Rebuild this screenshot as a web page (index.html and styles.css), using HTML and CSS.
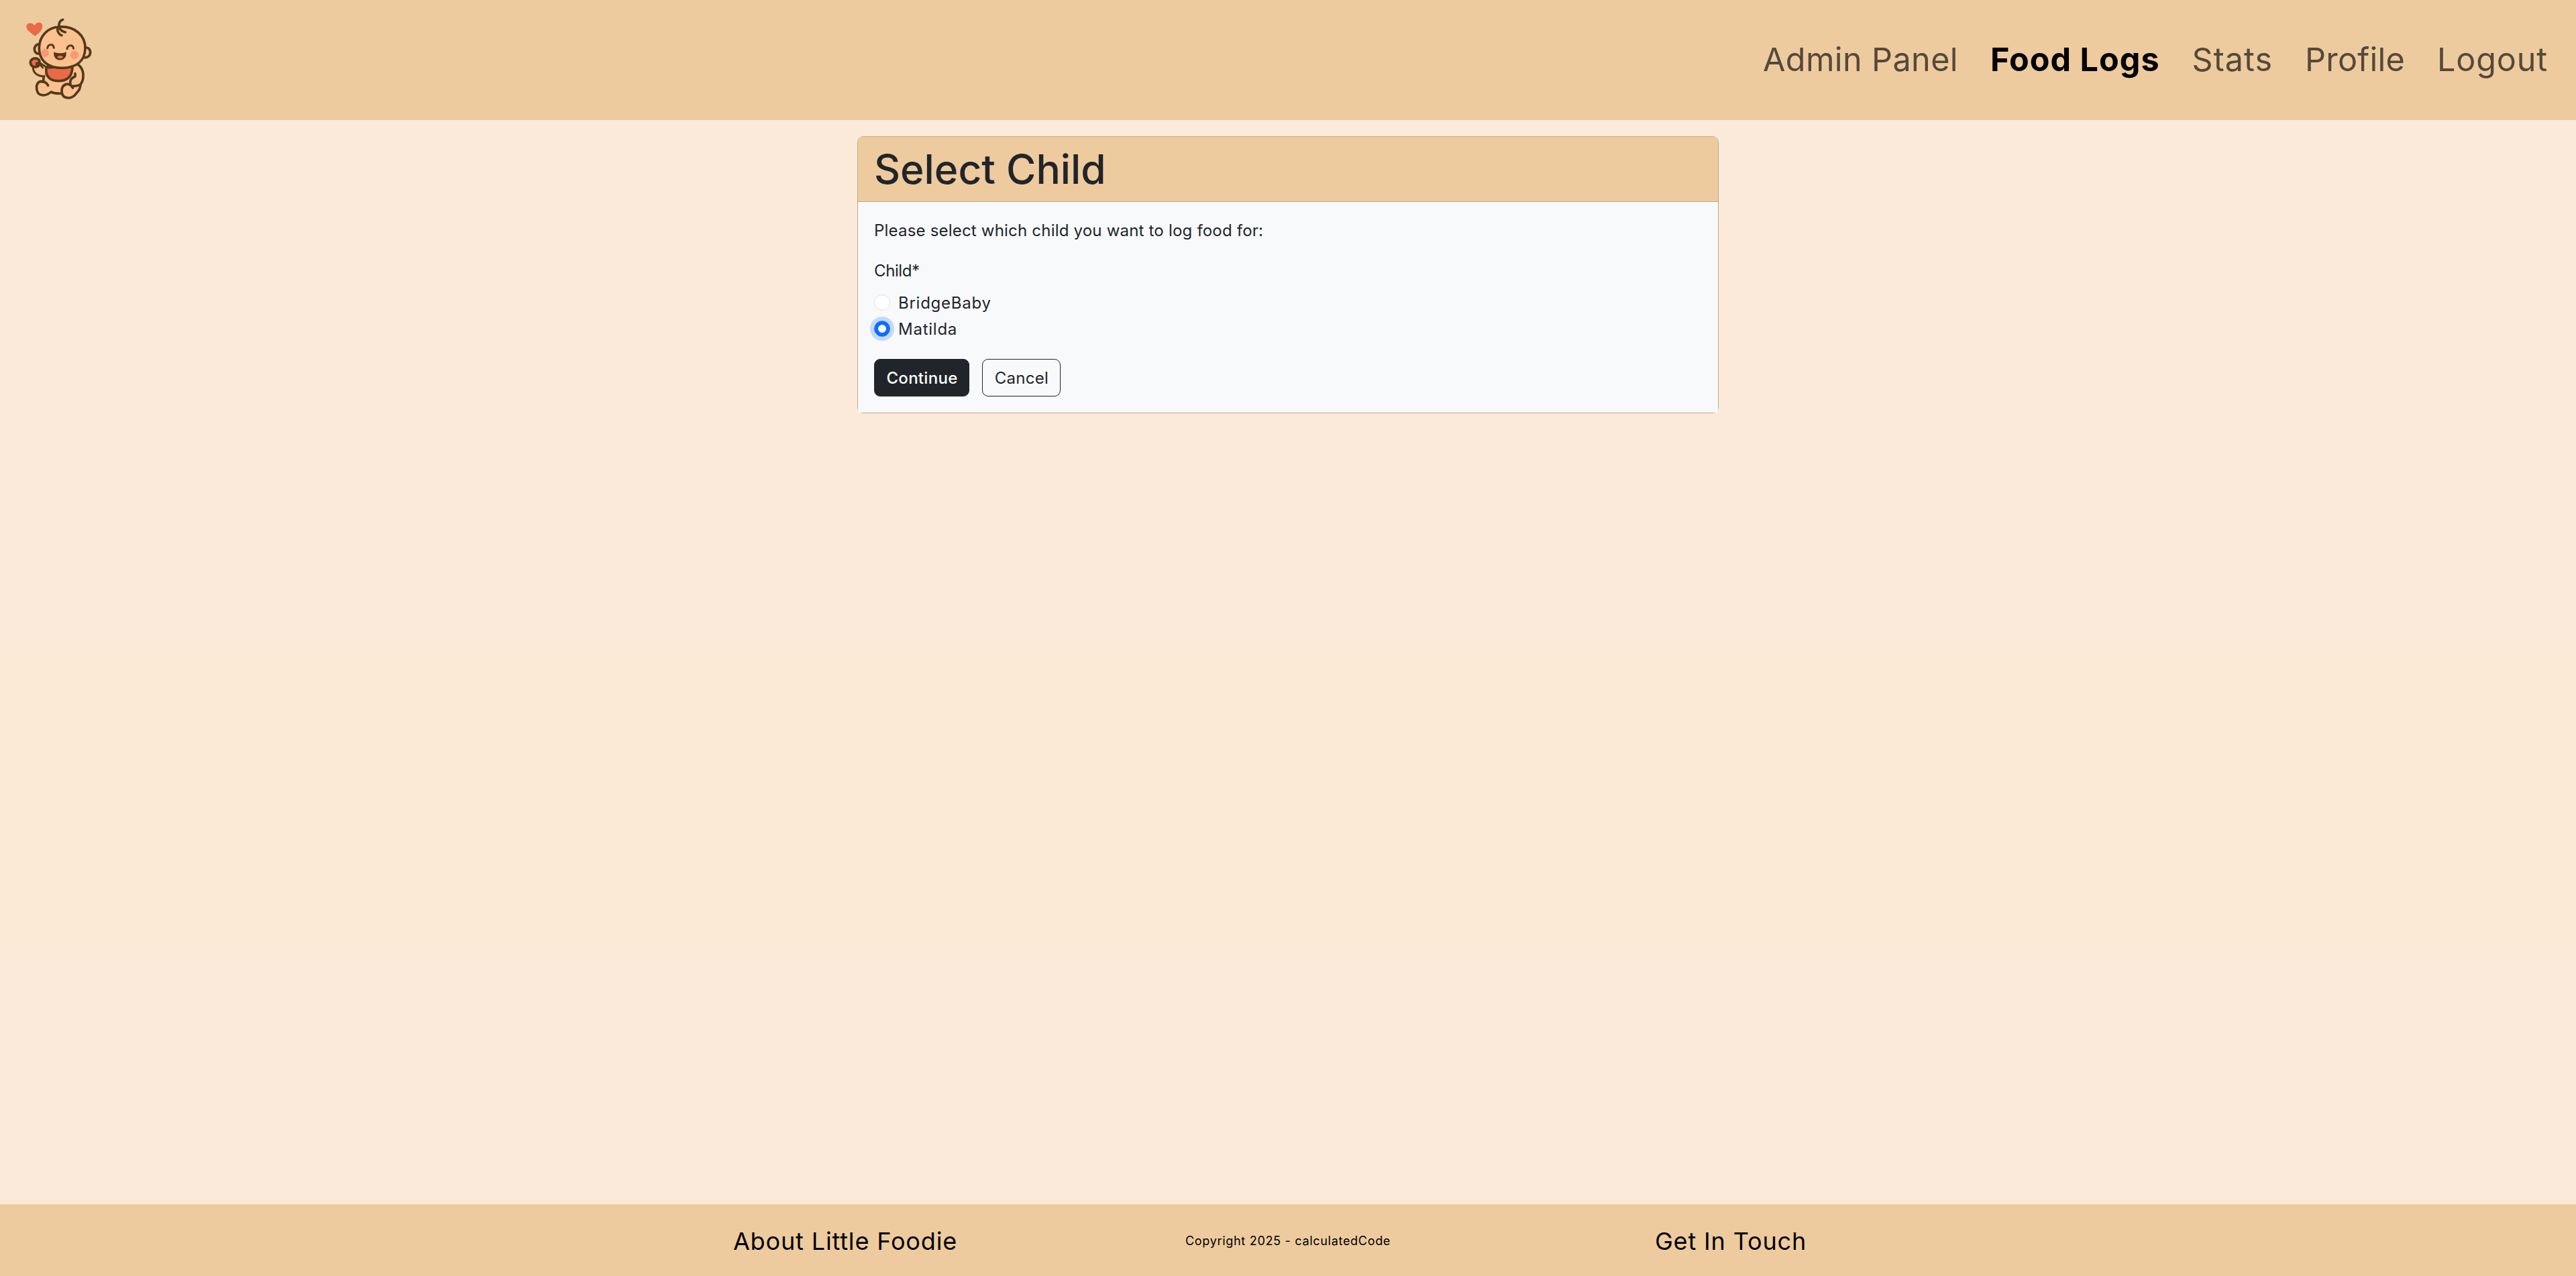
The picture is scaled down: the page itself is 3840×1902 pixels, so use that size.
FILE: index.html
```html
<!DOCTYPE html>
<html lang="en">
<head>
<meta charset="utf-8">
<title>Little Foodie</title>
<link rel="stylesheet" href="styles.css">
</head>
<body>
<header class="navbar">
  <a class="brand" href="#" aria-label="Little Foodie">
    <svg class="logo" viewBox="0 0 420 480" fill="none" stroke="#54391a" stroke-width="11" stroke-linecap="round" stroke-linejoin="round">
      <path d="M97 131C80 118 58 106 58 89c0-17 24-22 37-5 8-19 35-17 35 2 0 20-19 34-33 45z" fill="#ea6a48" stroke="none"/>
      <path d="M150 268C138 284 134 312 134 336c-28-10-34 20-28 40 5 22 36 28 62 5 12 6 32 8 50 7 2 14 14 20 30 20 24-2 32-20 46-36 5-9 6-15 5-24 12-12 14-30 13-48-2-20-10-32-24-42z" fill="#fac18e"/>
      <path d="M88 266c-1 27 17 44 50 45l14-39c-10-8-24-20-38-16z" fill="#fac18e" stroke="none"/>
      <path d="M147 272c-4 34 10 60 54 60 45 0 62-24 63-64z" fill="#ea6a48"/>
      <path d="M120 168c-16-3-26 8-26 22 0 13 9 22 23 20M316 184c14-6 28 5 28 20 0 17-16 28-34 22" fill="#fac18e"/>
      <path d="M206 90c-54 2-90 42-91 94-1 54 36 90 104 90 66-2 101-34 102-88C322 130 276 86 206 90z" fill="#fac18e"/>
      <path d="M204 94c-2-18 2-32 17-36M205 92c4 12 13 19 27 22M197 98c0 15 8 27 19 30"/>
      <circle cx="141" cy="207" r="18" fill="#fa9774" stroke="none"/>
      <circle cx="273" cy="216" r="18.500" fill="#fa9774" stroke="none"/>
      <path d="M152 185c4-20 26-20 29-1M240 188c3-18 25-20 29-1" stroke-width="9"/>
      <path d="M183 205c5 4 14 5 25 5s20-1 26-5c1 19-7 30-25 31-18 0-27-12-26-31z" fill="#54391a" stroke-width="5"/>
      <path d="M195 225c8-8 20-8 28 0-5 8-22 9-28 0z" fill="#f06f4e" stroke="none"/>
      <path d="M88 268c-14-7-16-24-4-33 12-9 30-4 33 10l-3 17c-6 7-15 10-26 6z" fill="#ea6a48"/>
      <path d="M109 251c-9 1-8 14 2 15M88 270c-1 24 17 41 50 41M116 260c7-1 11 8 15 13M120 252c8 4 15 10 22 15" stroke-width="9"/>
      <path d="M124 334c16 0 25 6 31 18M217 384c-4-22 7-38 25-38 10 0 17 5 23 17M276 299v13c-18 6-26 20-20 40 12 6 28 3 45-3"/>
    </svg>
  </a>
  <nav class="nav-links">
    <a class="nav-admin" href="#">Admin Panel</a>
    <a class="nav-logs active" href="#">Food Logs</a>
    <a class="nav-stats" href="#">Stats</a>
    <a class="nav-profile" href="#">Profile</a>
    <a class="nav-logout" href="#">Logout</a>
  </nav>
</header>
<main>
  <section class="card">
    <div class="card-header"><h1>Select Child</h1></div>
    <form class="card-body">
      <p>Please select which child you want to log food for:</p>
      <div class="legend">Child*</div>
      <label class="check"><input type="radio" name="child"><span>BridgeBaby</span></label>
      <label class="check"><input type="radio" name="child" checked><span>Matilda</span></label>
      <div class="actions">
        <button class="btn primary" type="button">Continue</button>
        <button class="btn outline" type="button">Cancel</button>
      </div>
    </form>
  </section>
</main>
<footer class="footer">
  <div class="footer-row">
    <a class="foot-link" href="#">About Little Foodie</a>
    <small>Copyright 2025 - calculatedCode</small>
    <a class="foot-link" href="#">Get In Touch</a>
  </div>
</footer>
</body>
</html>
```
FILE: styles.css
```css
* { box-sizing: border-box; }
html { font-size: 24px; }
body {
  margin: 0;
  min-height: 100vh;
  display: flex;
  flex-direction: column;
  font-family: Inter, sans-serif;
  font-size: 24px;
  line-height: 36px;
  color: #212529;
  background: linear-gradient(#fbead9 0 49%, #faead6 51% 74%, #fbead9 76%);
}
a { color: inherit; text-decoration: none; }
.navbar {
  height: 179px;
  display: flex;
  align-items: center;
  justify-content: space-between;
  padding: 0 42px 0 20px;
  background: #edcb9f;
}
.logo { display: block; width: 140px; height: 160px; }
.nav-links {
  display: flex;
  gap: 48px;
  padding-bottom: 2px;
  font-size: 48.5px;
  color: #54493a;
}
.nav-links .active { color: #000; font-weight: 700; }
.nav-admin { letter-spacing: 0.4px; }
.nav-logs { letter-spacing: 1px; }
.nav-stats { letter-spacing: 1px; }
.nav-profile { letter-spacing: 0.25px; }
.nav-logout { letter-spacing: 0.85px; }
main { flex: 1; padding-top: 24px; }
.card {
  width: 1284px;
  height: 413px;
  margin: 0 auto;
  border: 1px solid #c4aa84;
  border-radius: 9px;
}
.card-header {
  height: 97px;
  padding: 12px 24px;
  background: #edcb9f;
  border-bottom: 1px solid #c4aa84;
  border-radius: 8px 8px 0 0;
}
h1 {
  margin: 0;
  font-size: 60.5px;
  line-height: 72px;
  font-weight: 500;
}
.card-body { height: 314px; padding: 25px 24px 24px; background: #f8f9fb; }
p { margin: 0 0 24px; letter-spacing: 0.2px; }
.legend { margin-bottom: 11px; letter-spacing: -0.4px; }
.check {
  display: flex;
  gap: 12px;
  align-items: center;
  height: 36px;
  margin-bottom: 3px;
  letter-spacing: 0.75px;
}
.check span { padding-top: 1px; }
.check input {
  appearance: none;
  margin: 0;
  width: 24px;
  height: 24px;
  border: 1px solid #dee2e6;
  border-radius: 50%;
  background: #fff;
}
.check input:checked {
  border-color: #0d6efd;
  background: radial-gradient(circle, #fff 5.5px, #0d6efd 6.2px);
  box-shadow: 0 0 0 6px #c3d8fc;
}
.actions { display: flex; gap: 19px; margin-top: 27px; }
.btn {
  height: 56px;
  padding: 2px 0 0 1px;
  font: inherit;
  letter-spacing: 0.3px;
  border: 1px solid #212529;
  border-radius: 9px;
}
.primary { width: 142px; background: #212529; color: #fff; font-weight: 500; }
.outline { width: 117px; background: transparent; color: #212529; }
.footer { height: 107px; background: #edcb9f; color: #000; }
.footer-row {
  width: 1980px;
  height: 100%;
  margin: 0 auto;
  padding-top: 2px;
  display: grid;
  grid-template-columns: repeat(3, 1fr);
  place-items: center;
}
.foot-link { font-size: 36px; letter-spacing: 0.85px; }
small { font-size: 18px; letter-spacing: 0.7px; }
```
